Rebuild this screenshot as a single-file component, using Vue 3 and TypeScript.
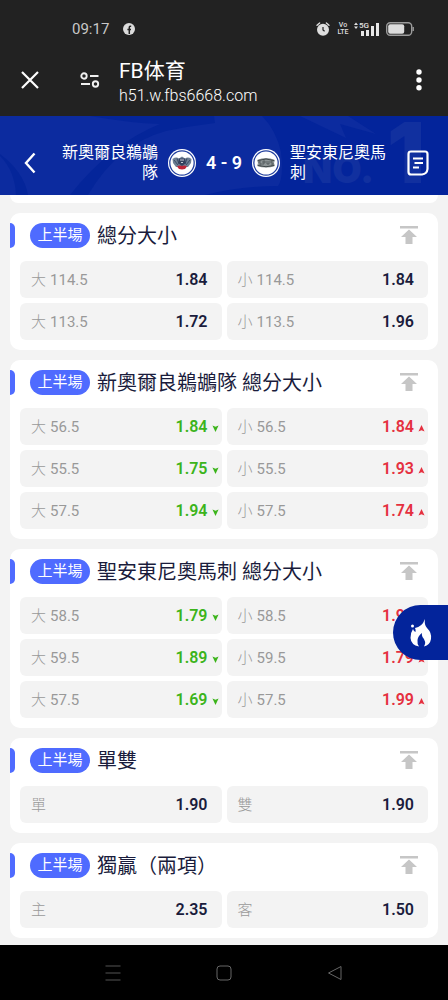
<script setup lang="ts">
type Trend = 'up' | 'down' | 'flat'

interface Pick {
  side: string
  line: string
  odds: string
  trend: Trend
}

interface Market {
  title: string
  picks: Pick[]
}

const pick = (side: string, line: string, odds: string, trend: Trend = 'flat'): Pick => ({ side, line, odds, trend })

const markets: Market[] = [
  {
    title: '總分大小',
    picks: [
      pick('大', '114.5', '1.84'), pick('小', '114.5', '1.84'),
      pick('大', '113.5', '1.72'), pick('小', '113.5', '1.96'),
    ],
  },
  {
    title: '新奧爾良鵜鶘隊 總分大小',
    picks: [
      pick('大', '56.5', '1.84', 'down'), pick('小', '56.5', '1.84', 'up'),
      pick('大', '55.5', '1.75', 'down'), pick('小', '55.5', '1.93', 'up'),
      pick('大', '57.5', '1.94', 'down'), pick('小', '57.5', '1.74', 'up'),
    ],
  },
  {
    title: '聖安東尼奧馬刺 總分大小',
    picks: [
      pick('大', '58.5', '1.79', 'down'), pick('小', '58.5', '1.90', 'up'),
      pick('大', '59.5', '1.89', 'down'), pick('小', '59.5', '1.79', 'up'),
      pick('大', '57.5', '1.69', 'down'), pick('小', '57.5', '1.99', 'up'),
    ],
  },
  { title: '單雙', picks: [pick('單', '', '1.90'), pick('雙', '', '1.90')] },
  { title: '獨贏（兩項）', picks: [pick('主', '', '2.35'), pick('客', '', '1.50')] },
]
</script>

<template>
  <div class="screen">
    <header class="chrome">
      <div class="status">
        <span class="clock">09:17</span>
        <svg class="fb" viewBox="0 0 12 12" aria-hidden="true">
          <circle cx="6" cy="6" r="6" fill="#dcdcdc" />
          <path d="M6.3 11V4.6Q6.3 3 8.2 3.2M4.4 6.4H8" fill="none" stroke="#222" stroke-width="1.5" />
        </svg>
        <span class="spacer"></span>
        <svg class="alarm" viewBox="0 0 14 14" aria-hidden="true">
          <circle cx="7" cy="7.8" r="6" fill="#dedede" />
          <path d="M1 3.2 3.6 1M13 3.2 10.4 1" stroke="#dedede" stroke-width="1.4" stroke-linecap="round" />
          <path d="M7 5V8L8.6 9.3" fill="none" stroke="#222" stroke-width="1.2" />
        </svg>
        <span class="volte"><span>Vo</span><span>LTE</span></span>
        <svg class="signal" viewBox="0 0 26 14" aria-hidden="true">
          <path d="M0 3 2 .5 4 3ZM0 4.5 2 7 4 4.5Z" fill="#e2e2e2" />
          <text x="5" y="6" class="five-g">5G</text>
          <path d="M8.500 9V14M13.500 8V14M18.500 4V14M23.500 1V14" stroke="#e8e8e8" stroke-width="3" />
        </svg>
        <svg class="battery" viewBox="0 0 28 14" aria-hidden="true">
          <rect x=".7" y=".7" width="25" height="12.600" rx="3.500" fill="none" stroke="#9b9b9b" stroke-width="1.400" />
          <rect x="2.200" y="2.200" width="16" height="9.600" rx="2" fill="#dcdcdc" />
          <path d="M27.200 5V9" stroke="#9b9b9b" stroke-width="1.400" />
        </svg>
      </div>
      <div class="browser">
        <button class="icon-btn close" type="button" aria-label="關閉">
          <svg width="18" height="18" viewBox="0 0 18 18"><path d="M1 1 17 17M17 1 1 17" stroke="#fff" stroke-width="2.200" /></svg>
        </button>
        <button class="icon-btn tune" type="button" aria-label="網站設定">
          <svg width="20" height="16" viewBox="0 0 20 16" fill="none" stroke="#f0f0f0" stroke-width="1.900">
            <circle cx="4" cy="4" r="2.700" /><path d="M10 4H18.500M1 12H10" /><circle cx="15.500" cy="12" r="2.700" />
          </svg>
        </button>
        <div class="address">
          <span class="site">FB体育</span>
          <span class="url">h51.w.fbs6668.com</span>
        </div>
        <button class="icon-btn more" type="button" aria-label="更多">
          <svg width="6" height="22" viewBox="0 0 6 22" fill="#fff"><circle cx="3" cy="3" r="2.700" /><circle cx="3" cy="11" r="2.700" /><circle cx="3" cy="18.800" r="2.700" /></svg>
        </button>
      </div>
    </header>

    <section class="match">
      <svg class="backdrop" viewBox="0 0 448 79" preserveAspectRatio="none" aria-hidden="true">
        <path d="M0 0H448V79H0Z" fill="#0c2b9f" />
        <path d="M90 0Q130 7 160 8Q110 28 70 79H88Q118 28 166 15Q190 10 215 7L214 0Z" fill="#04259a" />
        <path d="M0 38Q24 56 28 79H16Q15 55 0 40Z" fill="#04259a" />
        <path d="M262 0Q276 14 281 36Q284 62 278 70Q240 70 205 79H448V0Z" fill="#03249b" />
        <path d="M300 0 346 22 340 8 376 18 348 0Z" fill="#0c2b9f" />
        <text x="303" y="67" class="mark small">NO.</text>
        <text x="387" y="67" class="mark big">1</text>
      </svg>
      <button class="icon-btn back" type="button" aria-label="返回">
        <svg width="12" height="22" viewBox="0 0 12 22"><path d="M10.500 1.500 2 11 10.500 20.500" fill="none" stroke="#fff" stroke-width="2.400" /></svg>
      </button>
      <span class="team home">新奧爾良鵜鶘隊</span>
      <svg class="logo" viewBox="0 0 28 28" aria-hidden="true">
        <circle cx="14" cy="14" r="14" fill="#fff" />
        <circle cx="14" cy="14" r="12.200" fill="#fff" stroke="#23419f" stroke-width="1.300" />
        <path d="M4.500 10Q8 7.500 11 9.500L14 7.500 17 9.500Q20 7.500 23.500 10L23 14 20 18H8L5 14Z" fill="#6d7f94" />
        <path d="M6 11 10 16M9 9.500 11 15M19 9.500 17 15M22 11 18 16" stroke="#3b4b66" />
        <path d="M11 9.500H17L18 14 14 17 10 14Z" fill="#34415e" />
        <path d="M12 11H16M13 13.500H15" stroke="#c4cbd4" />
        <path d="M9 17.500Q11.500 16 14 17Q16.500 16 19 17.500L17 20 14 20.500 11 20Z" fill="#bd2538" />
      </svg>
      <span class="score">4 - 9</span>
      <svg class="logo" viewBox="0 0 28 28" aria-hidden="true">
        <circle cx="14" cy="14" r="14" fill="#fff" />
        <circle cx="14" cy="14" r="12.200" fill="#fff" stroke="#23419f" stroke-width="1.300" />
        <path d="M5 11Q14 7 23 11L22 14 23 17Q14 20 5 17L6 14Z" fill="#8e9697" />
        <path d="M6 11.500Q14 8.500 22 11.500M6 16.500Q14 19 22 16.500" fill="none" stroke="#3f4749" />
        <path d="M9 12H7V14H9V16H7M11 16V12H13V14H11M15 12V15H17V12M21 12H19V14H21V16H19" fill="none" stroke="#4c5456" stroke-width=".8" />
      </svg>
      <span class="team away">聖安東尼奧馬刺</span>
      <button class="icon-btn slip" type="button" aria-label="注單">
        <svg width="22" height="26" viewBox="0 0 22 26" fill="none" stroke="#fff" stroke-width="2.200">
          <path d="M4 1.500H18Q20.500 1.500 20.500 4V19Q20 24 15 24.500H4Q1.500 24.500 1.500 22V4Q1.500 1.500 4 1.500Z" stroke-linejoin="round" />
          <path d="M6 8.500H16M7.500 13H16M6 17.500H12" />
        </svg>
      </button>
    </section>

    <main class="markets">
      <div class="card tail"></div>
      <section v-for="market in markets" :key="market.title" class="card">
        <div class="card-head">
          <span class="badge">上半場</span>
          <h2>{{ market.title }}</h2>
          <button class="icon-btn pin" type="button" :aria-label="'置頂 ' + market.title">
            <svg width="18" height="18" viewBox="0 0 18 18" fill="#c6c6c6"><path d="M0 0H18V2.500H0ZM9 3.500 17 11H12.500V18H5.500V11H1Z" /></svg>
          </button>
        </div>
        <div class="picks">
          <button v-for="(p, i) in market.picks" :key="i" class="pick" :class="p.trend" type="button">
            <span class="label"><span class="side">{{ p.side }}</span>{{ p.line }}</span>
            <span class="odds">{{ p.odds }}</span>
            <svg v-if="p.trend !== 'flat'" class="arrow" viewBox="0 0 8 8" aria-hidden="true">
              <path v-if="p.trend === 'up'" d="M4 0 7.500 7.500 4 6 .5 7.500Z" />
              <path v-else d="M4 8 .5 .5 4 2 7.500 .5Z" />
            </svg>
          </button>
        </div>
      </section>
    </main>

    <button class="hot" type="button" aria-label="熱門">
      <svg width="22" height="30" viewBox="0 0 22 30">
        <path d="M15 1Q14 7 17 10Q22 15 21 21Q20 27 14 28.500Q17 24 12.500 19Q11.500 17 12 15Q8 18 7.500 22Q7 26 9 28.500Q1 27 .5 20Q.3 15 3 11Q4 14 5.500 14Q6 12 5 10Q12 9 15 1Z" fill="#fff" />
        <circle cx="2.500" cy="8" r="1.500" fill="#fff" />
      </svg>
    </button>

    <nav class="system">
      <button class="icon-btn" type="button" aria-label="最近">
        <svg width="16" height="16" viewBox="0 0 16 16"><path d="M.5 1H15.500M.5 8H15.500M.5 15H15.500" stroke="#555" /></svg>
      </button>
      <button class="icon-btn" type="button" aria-label="主畫面">
        <svg width="16" height="16" viewBox="0 0 16 16"><rect x="1" y="1" width="14" height="14" rx="3" fill="none" stroke="#666" /></svg>
      </button>
      <button class="icon-btn" type="button" aria-label="上一頁">
        <svg width="16" height="16" viewBox="0 0 16 16"><path d="M14 1.500V14.500L1.500 8Z" fill="none" stroke="#666" stroke-linejoin="round" /></svg>
      </button>
    </nav>
  </div>
</template>

<style>
body {
  background: #000;
}
</style>

<style scoped>
.screen {
  position: relative;
  display: flex;
  flex-direction: column;
  min-height: 100vh;
  background: #f3f3f3;
  font-family: Roboto, "Noto Sans CJK SC", sans-serif;
}
button {
  margin: 0;
  padding: 0;
  border: 0;
  background: none;
  font: inherit;
  cursor: pointer;
}
svg {
  display: block;
  flex: none;
}
.icon-btn {
  display: flex;
  align-items: center;
  justify-content: center;
  flex: none;
}
.chrome {
  background: #222;
  color: #fff;
  padding-bottom: 6px;
}
.status {
  display: flex;
  align-items: center;
  height: 20px;
  padding: 19px 34px 11px 72px;
}
.clock {
  font-size: 15px;
  line-height: 20px;
  color: #c8c8c8;
}
.fb {
  width: 12px;
  height: 12px;
  margin-left: 14px;
}
.spacer {
  flex: 1;
}
.alarm {
  width: 14px;
  height: 14px;
}
.volte {
  display: flex;
  flex-direction: column;
  align-items: center;
  width: 10px;
  margin: 0 6px 0 8px;
  font-size: 7px;
  line-height: 7px;
  font-weight: 500;
  color: #ddd;
}
.signal {
  width: 26px;
  height: 14px;
}
.five-g {
  font-size: 8px;
  font-weight: 500;
  fill: #e2e2e2;
}
.battery {
  width: 28px;
  height: 14px;
  margin-left: 6px;
}
.browser {
  display: flex;
  align-items: center;
  height: 60px;
}
.close {
  width: 60px;
  height: 44px;
}
.tune {
  width: 59px;
  height: 44px;
}
.address {
  display: flex;
  flex: 1;
  flex-direction: column;
  min-width: 0;
  padding-top: 6px;
}
.site {
  font-size: 21px;
  line-height: 26px;
}
.url {
  font-size: 16px;
  line-height: 24px;
  font-weight: 300;
}
.more {
  width: 58px;
  height: 44px;
}
.match {
  position: relative;
  display: flex;
  align-items: center;
  justify-content: space-between;
  min-height: 79px;
  padding-top: 14px;
  box-sizing: border-box;
  color: #fff;
}
.backdrop {
  position: absolute;
  inset: 0;
  width: 100%;
  height: 100%;
}
.mark {
  font-family: Inter, sans-serif;
  font-weight: 900;
  fill: #11309f;
}
.small {
  font-size: 38px;
}
.big {
  font-size: 84px;
}
.match > :not(.backdrop) {
  position: relative;
}
.back {
  width: 60px;
  height: 44px;
}
.team {
  flex: 1;
  font-size: 16px;
  line-height: 20px;
}
.home {
  text-align: right;
}
.logo {
  width: 28px;
  height: 28px;
  margin: 0 10px;
}
.score {
  flex: none;
  width: 36px;
  text-align: center;
  white-space: nowrap;
  font-size: 18px;
  line-height: 24px;
  font-weight: 600;
}
.slip {
  width: 60px;
  height: 44px;
}
.markets {
  flex: 1;
  display: flex;
  flex-direction: column;
  gap: 10px;
  padding: 0 10px 7px;
}
.card {
  background: #fff;
  border-radius: 10px;
  padding: 0 10px 10px;
}
.tail {
  height: 8px;
  padding: 0;
  border-radius: 0 0 10px 10px;
}
.card-head {
  display: flex;
  align-items: center;
  height: 44px;
  padding-bottom: 4px;
  margin-left: -10px;
}
.card-head::before {
  content: "";
  width: 5px;
  height: 25px;
  margin-right: 15px;
  border-radius: 0 5px 5px 0;
  background: #4f6bff;
}
.badge {
  flex: none;
  width: 60px;
  height: 25px;
  border-radius: 13px;
  background: #4f6bff;
  color: #fff;
  text-align: center;
  font-size: 15px;
  line-height: 25px;
}
h2 {
  flex: 1;
  margin: 0 0 0 7px;
  padding-top: 2px;
  font-size: 20px;
  line-height: 28px;
  font-weight: 400;
  color: #1a1c3c;
}
.pin {
  width: 38px;
  height: 40px;
}
.picks {
  display: grid;
  grid-template-columns: 1fr 1fr;
  gap: 5px;
}
.pick {
  position: relative;
  display: flex;
  align-items: center;
  justify-content: space-between;
  height: 37px;
  padding: 0 14px 0 11px;
  border-radius: 6px;
  background: #f3f3f3;
}
.label {
  display: flex;
  align-items: center;
  gap: 4px;
  font-size: 15px;
  line-height: 20px;
  color: #999;
}
.side {
  font-weight: 300;
}
.odds {
  font-size: 16px;
  line-height: 24px;
  font-weight: 600;
  color: #1a1c3c;
}
.down .odds {
  color: #3cb41b;
}
.up .odds {
  color: #e5303f;
}
.arrow {
  position: absolute;
  right: 3px;
  top: 17px;
  width: 7px;
  height: 7px;
}
.down .arrow {
  fill: #3cb41b;
}
.up .arrow {
  fill: #e5303f;
}
.hot {
  position: fixed;
  right: 0;
  top: 605px;
  display: flex;
  align-items: center;
  justify-content: center;
  width: 55px;
  height: 55px;
  border-radius: 28px 0 0 28px;
  background: #03249b;
}
.system {
  display: flex;
  align-items: center;
  justify-content: center;
  gap: 95px;
  height: 55px;
  background: #000;
}
</style>
